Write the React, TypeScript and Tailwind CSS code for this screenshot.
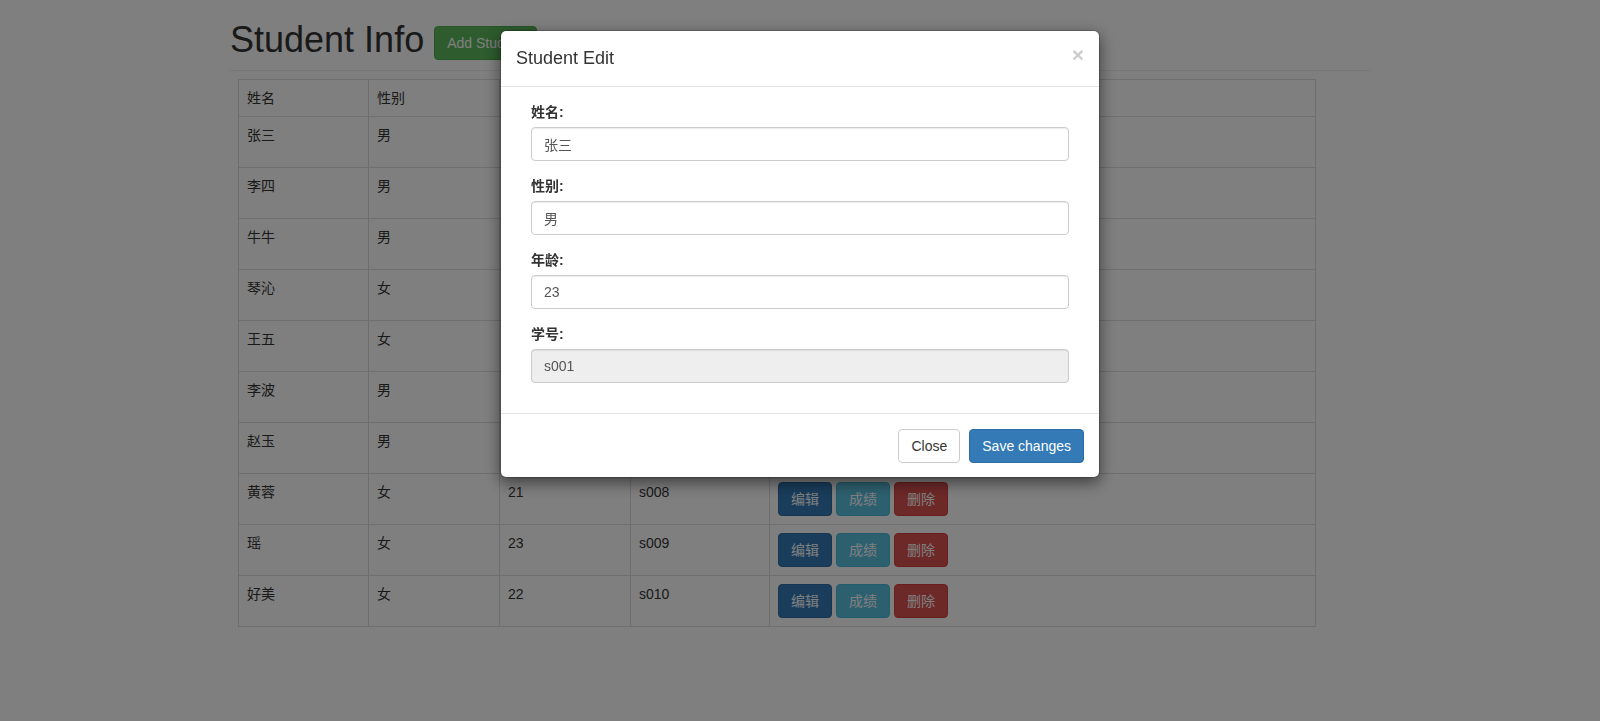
import React from "react";

const rows = [
  ["张三", "男", "23", "s001"],
  ["李四", "男", "22", "s002"],
  ["牛牛", "男", "21", "s003"],
  ["琴沁", "女", "20", "s004"],
  ["王五", "女", "22", "s005"],
  ["李波", "男", "24", "s006"],
  ["赵玉", "男", "23", "s007"],
  ["黄蓉", "女", "21", "s008"],
  ["瑶", "女", "23", "s009"],
  ["好美", "女", "22", "s010"],
];

const btn =
  "inline-block px-[12px] py-[6px] text-[14px] leading-[20px] rounded-[4px] border border-solid text-white";

function Field({ label, value, disabled }: { label: string; value: string; disabled?: boolean }) {
  return (
    <div className="mb-[15px]">
      <label className="block mb-[5px] text-[14px] leading-[20px] font-bold text-[#333]">{label}</label>
      <input
        readOnly
        value={value}
        className={`block w-full h-[34px] px-[12px] py-[6px] text-[14px] leading-[20px] text-[#555] border border-[#ccc] rounded-[4px] shadow-[inset_0_1px_1px_rgba(0,0,0,0.075)] outline-none ${
          disabled ? "bg-[#eee]" : "bg-white"
        }`}
      />
    </div>
  );
}

export default function App() {
  return (
    <div className="min-h-[721px] bg-white font-['Liberation_Sans','Noto_Sans_CJK_SC',sans-serif] text-[#333] text-[14px] leading-[20px]">
      <div className="w-[1140px] ml-[230px] pt-[20px]">
        <div className="flex items-end gap-[10px] mb-[10px]">
          <h1 className="text-[36px] leading-[39.6px] font-normal">Student Info</h1>
          <button className={`${btn} bg-[#5cb85c] border-[#4cae4c]`}>Add Student</button>
        </div>
        <div className="h-px bg-[#eee]" />
        <table className="mt-[8px] ml-[8px] w-[1078px] table-fixed border-collapse">
          <colgroup>
            <col className="w-[130px]" />
            <col className="w-[131px]" />
            <col className="w-[131px]" />
            <col className="w-[139px]" />
            <col />
          </colgroup>
          <tbody>
            <tr>
              {["姓名", "性别", "年龄", "学号", "操作"].map((h) => (
                <td key={h} className="border border-[#ddd] p-[8px] align-top">
                  {h}
                </td>
              ))}
            </tr>
            {rows.map((r) => (
              <tr key={r[3]}>
                {r.map((c, i) => (
                  <td key={i} className="border border-[#ddd] p-[8px] align-top">
                    {c}
                  </td>
                ))}
                <td className="border border-[#ddd] p-[8px] align-top">
                  <div className="flex gap-[4px]">
                    <button className={`${btn} bg-[#337ab7] border-[#2e6da4]`}>编辑</button>
                    <button className={`${btn} bg-[#5bc0de] border-[#46b8da]`}>成绩</button>
                    <button className={`${btn} bg-[#d9534f] border-[#d43f3a]`}>删除</button>
                  </div>
                </td>
              </tr>
            ))}
          </tbody>
        </table>
      </div>

      {/* backdrop */}
      <div className="fixed inset-0 bg-black/50" />

      {/* modal */}
      <div className="fixed inset-0 flex justify-center">
        <div className="mt-[30px] w-[600px] self-start bg-white border border-black/20 rounded-[6px] shadow-[0_5px_15px_rgba(0,0,0,0.5)] bg-clip-padding">
          <div className="flex items-start justify-between px-[15px] pt-[15px] pb-[14px] border-b border-[#e5e5e5]">
            <h4 className="text-[18px] leading-[25.7px] text-[#333]">Student Edit</h4>
            <button className="text-[21px] leading-[21px] font-bold text-black opacity-20 -mt-[2px] [text-shadow:0_1px_0_#fff]">
              ×
            </button>
          </div>
          <div className="p-[15px]">
            <div className="px-[15px]">
              <Field label="姓名:" value="张三" />
              <Field label="性别:" value="男" />
              <Field label="年龄:" value="23" />
              <Field label="学号:" value="s001" disabled />
            </div>
          </div>
          <div className="flex justify-end gap-[9px] px-[15px] pt-[15px] pb-[14px] border-t border-[#e5e5e5]">
            <button className="inline-block px-[12px] py-[6px] text-[14px] leading-[20px] rounded-[4px] border border-[#ccc] bg-white text-[#333]">
              Close
            </button>
            <button className={`${btn} bg-[#337ab7] border-[#2e6da4]`}>Save changes</button>
          </div>
        </div>
      </div>
    </div>
  );
}
